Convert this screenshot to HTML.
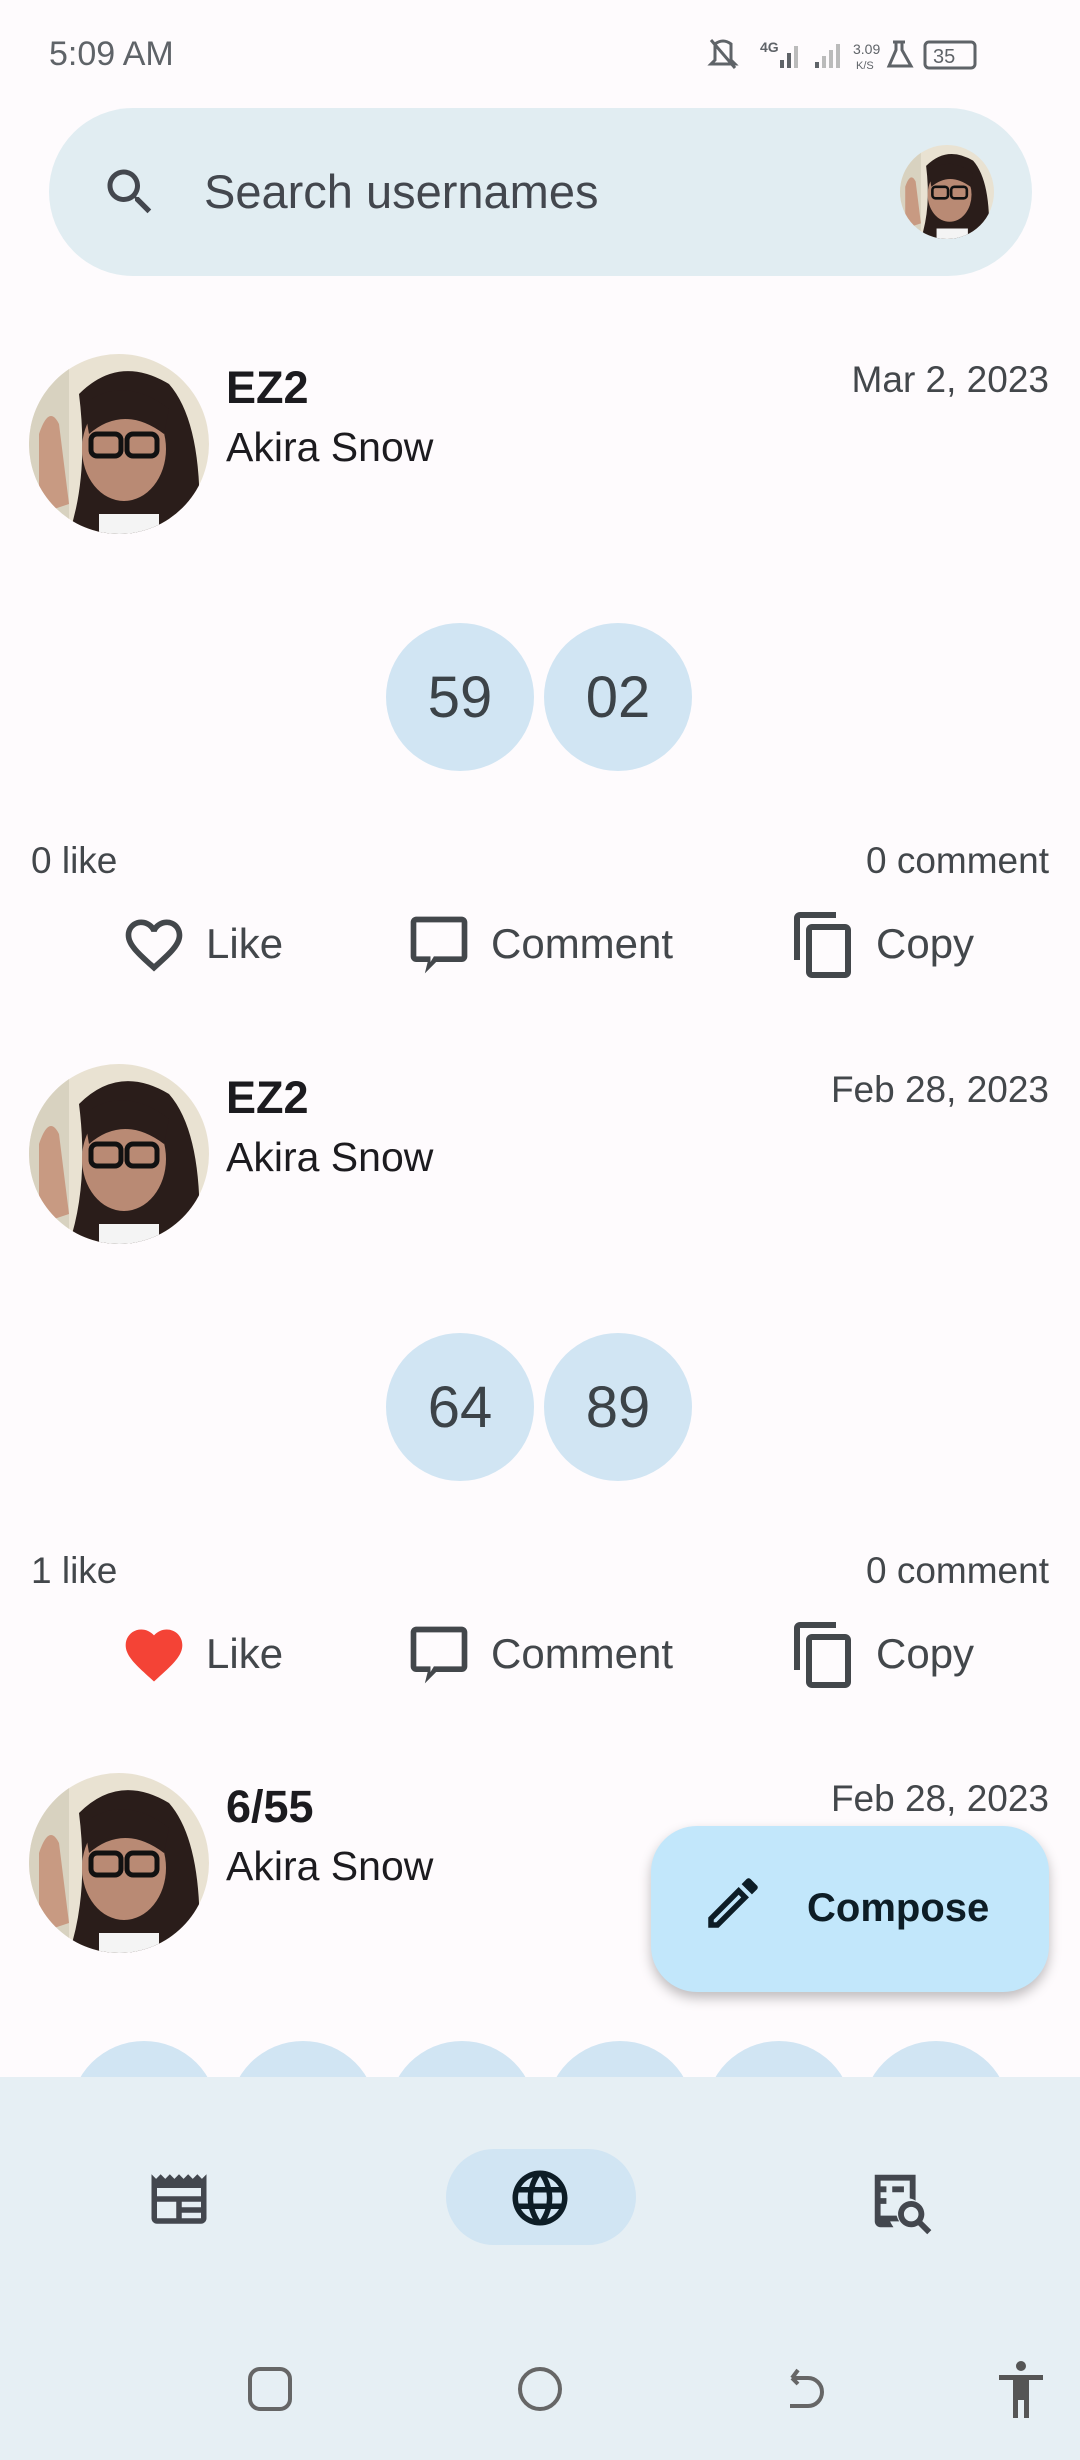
<!DOCTYPE html>
<html><head><meta charset="utf-8">
<style>
*{margin:0;padding:0;box-sizing:border-box}
body{width:1080px;height:2460px;background:#fefbfd;font-family:"Liberation Sans",sans-serif;position:relative;overflow:hidden;color:#1c1b1f}
.a{position:absolute}
.t{white-space:nowrap}
.circ{position:absolute;width:148px;height:148px;border-radius:50%;background:#d1e5f3;color:#3c4348;font-size:58px;display:flex;align-items:center;justify-content:center}
.gray{color:#43474b}
</style></head><body>
<svg width="0" height="0" style="position:absolute"><defs>
<g id="av">
<circle cx="90" cy="90" r="90" fill="#e9e2d2"/>
<clipPath id="cp"><circle cx="90" cy="90" r="90"/></clipPath>
<g clip-path="url(#cp)">
<rect x="0" y="0" width="40" height="180" fill="#d8d2c0"/>
<path d="M50 40 Q90 0 140 30 Q175 70 170 180 L40 180 Q60 120 50 40Z" fill="#2a1d1a"/>
<ellipse cx="95" cy="95" rx="42" ry="52" fill="#b98a74"/>
<path d="M55 50 Q95 20 140 55 L135 80 Q95 50 60 80Z" fill="#2a1d1a"/>
<rect x="62" y="80" width="30" height="22" rx="6" fill="none" stroke="#111" stroke-width="5"/>
<rect x="98" y="80" width="30" height="22" rx="6" fill="none" stroke="#111" stroke-width="5"/>
<path d="M10 80 Q20 50 30 70 L40 150 L10 160Z" fill="#c89a82"/>
<path d="M70 160 L130 160 L130 180 L70 180Z" fill="#f4f4f4"/>
</g></g>
<g id="heart"><path d="M16.5 3c-1.74 0-3.41.81-4.5 2.09C10.91 3.81 9.24 3 7.5 3 4.42 3 2 5.420 2 8.5c0 3.78 3.4 6.86 8.55 11.54L12 21.35l1.45-1.32C18.6 15.36 22 12.28 22 8.5 22 5.42 19.58 3 16.5 3zm-4.4 15.55l-.1.1-.1-.1C7.14 14.24 4 11.39 4 8.5 4 6.5 5.5 5 7.5 5c1.54 0 3.04.99 3.570 2.36h1.87C13.46 5.99 14.96 5 16.5 5c2 0 3.5 1.5 3.5 3.5 0 2.89-3.14 5.74-7.9 10.05z"/></g>
<g id="heartf"><path d="M12 21.35l-1.45-1.32C5.4 15.36 2 12.28 2 8.5 2 5.42 4.42 3 7.5 3c1.74 0 3.41.81 4.5 2.09C13.09 3.81 14.76 3 16.5 3 19.58 3 22 5.42 22 8.5c0 3.78-3.4 6.86-8.55 11.54L12 21.35z"/></g>
<g id="cmt"><path d="M20 2H4c-1.1 0-2 .9-2 2v12c0 1.1.9 2 2 2h4l-1 4 4-4h9c1.1 0 2-.9 2-2V4c0-1.1-.9-2-2-2zm0 14h-9.8L9 18v-2H4V4h16v12z"/></g>
<g id="cpy"><path d="M16 1H4c-1.1 0-2 .9-2 2v14h2V3h12V1zm3 4H8c-1.1 0-2 .9-2 2v14c0 1.1.9 2 2 2h11c1.1 0 2-.9 2-2V7c0-1.1-.9-2-2-2zm0 16H8V7h11v14z"/></g>
</defs></svg>

<!-- status bar -->
<div class="a t" style="left:49px;top:35px;font-size:34px;color:#5f6368">5:09 AM</div>
<svg class="a" style="left:705px;top:36px" width="330" height="40" viewBox="0 0 330 40">
<g fill="#5f6368">
<path d="M10 8 Q18 2 26 8 L26 24 L30 28 L6 28 L10 24Z" fill="none" stroke="#5f6368" stroke-width="3"/>
<line x1="6" y1="4" x2="30" y2="32" stroke="#5f6368" stroke-width="3"/>
<text x="55" y="16" font-size="14" font-family="Liberation Sans" font-weight="bold">4G</text>
<rect x="75" y="24" width="4" height="8"/><rect x="82" y="17" width="4" height="15"/><rect x="89" y="10" width="4" height="22" fill="#bbb"/>
<rect x="110" y="26" width="4" height="6"/><rect x="117" y="20" width="4" height="12" fill="#bbb"/><rect x="124" y="14" width="4" height="18" fill="#bbb"/><rect x="131" y="8" width="4" height="24" fill="#bbb"/>
<text x="148" y="18" font-size="14" font-family="Liberation Sans">3.09</text>
<text x="151" y="33" font-size="11" font-family="Liberation Sans">K/S</text>
<path d="M188 6 L200 6 M191 6 L191 14 L184 30 L206 30 L197 14 L197 6" fill="none" stroke="#5f6368" stroke-width="3"/>
<rect x="220" y="6" width="50" height="26" rx="4" fill="none" stroke="#5f6368" stroke-width="3"/>
<text x="228" y="27" font-size="20" font-family="Liberation Sans">35</text>
</g></svg>

<!-- search -->
<div class="a" style="left:49px;top:108px;width:983px;height:168px;border-radius:84px;background:#e1edf2"></div>
<svg class="a" style="left:100px;top:162px" width="60" height="60" viewBox="0 0 24 24"><path fill="#43474e" d="M15.5 14h-.79l-.28-.27C15.41 12.59 16 11.11 16 9.5 16 5.91 13.09 3 9.5 3S3 5.91 3 9.5 5.91 16 9.5 16c1.61 0 3.09-.59 4.23-1.57l.27.28v.79l5 4.99L20.49 19l-4.99-5zm-6 0C7.01 14 5 11.990 5 9.5S7.01 5 9.5 5 14 7.01 14 9.5 11.99 14 9.5 14z"/></svg>
<div class="a t" style="left:204px;top:164px;font-size:47px;color:#43474e">Search usernames</div>
<svg class="a" style="left:900px;top:145px" width="94" height="94" viewBox="0 0 180 180"><use href="#av"/></svg>

<!-- Post 1 -->
<svg class="a" style="left:29px;top:354px" width="180" height="180" viewBox="0 0 180 180"><use href="#av"/></svg>
<div class="a t" style="left:226px;top:362px;font-size:45px;font-weight:bold">EZ2</div>
<div class="a t" style="left:226px;top:424px;font-size:41px">Akira Snow</div>
<div class="a t gray" style="right:31px;top:359px;font-size:37px">Mar 2, 2023</div>
<div class="circ" style="left:386px;top:623px">59</div>
<div class="circ" style="left:544px;top:623px">02</div>
<div class="a t gray" style="left:31px;top:840px;font-size:37px">0 like</div>
<div class="a t gray" style="right:31px;top:840px;font-size:37px">0 comment</div>
<svg class="a" style="left:120px;top:911px" width="68" height="68" viewBox="0 0 24 24" fill="#43474b"><use href="#heart"/></svg>
<div class="a t gray" style="left:206px;top:920px;font-size:42px">Like</div>
<svg class="a" style="left:405px;top:911px" width="68" height="68" viewBox="0 0 24 24" fill="#43474b"><use href="#cmt"/></svg>
<div class="a t gray" style="left:491px;top:920px;font-size:42px">Comment</div>
<svg class="a" style="left:788px;top:909px" width="72" height="72" viewBox="0 0 24 24" fill="#43474b"><use href="#cpy"/></svg>
<div class="a t gray" style="left:876px;top:920px;font-size:42px">Copy</div>

<!-- Post 2 -->
<svg class="a" style="left:29px;top:1064px" width="180" height="180" viewBox="0 0 180 180"><use href="#av"/></svg>
<div class="a t" style="left:226px;top:1072px;font-size:45px;font-weight:bold">EZ2</div>
<div class="a t" style="left:226px;top:1134px;font-size:41px">Akira Snow</div>
<div class="a t gray" style="right:31px;top:1069px;font-size:37px">Feb 28, 2023</div>
<div class="circ" style="left:386px;top:1333px">64</div>
<div class="circ" style="left:544px;top:1333px">89</div>
<div class="a t gray" style="left:31px;top:1550px;font-size:37px">1 like</div>
<div class="a t gray" style="right:31px;top:1550px;font-size:37px">0 comment</div>
<svg class="a" style="left:120px;top:1621px" width="68" height="68" viewBox="0 0 24 24" fill="#f44336"><use href="#heartf"/></svg>
<div class="a t gray" style="left:206px;top:1630px;font-size:42px">Like</div>
<svg class="a" style="left:405px;top:1621px" width="68" height="68" viewBox="0 0 24 24" fill="#43474b"><use href="#cmt"/></svg>
<div class="a t gray" style="left:491px;top:1630px;font-size:42px">Comment</div>
<svg class="a" style="left:788px;top:1619px" width="72" height="72" viewBox="0 0 24 24" fill="#43474b"><use href="#cpy"/></svg>
<div class="a t gray" style="left:876px;top:1630px;font-size:42px">Copy</div>

<!-- Post 3 -->
<svg class="a" style="left:29px;top:1773px" width="180" height="180" viewBox="0 0 180 180"><use href="#av"/></svg>
<div class="a t" style="left:226px;top:1781px;font-size:45px;font-weight:bold">6/55</div>
<div class="a t" style="left:226px;top:1843px;font-size:41px">Akira Snow</div>
<div class="a t gray" style="right:31px;top:1778px;font-size:37px">Feb 28, 2023</div>
<div class="circ" style="left:70px;top:2041px"></div>
<div class="circ" style="left:229px;top:2041px"></div>
<div class="circ" style="left:388px;top:2041px"></div>
<div class="circ" style="left:546px;top:2041px"></div>
<div class="circ" style="left:705px;top:2041px"></div>
<div class="circ" style="left:862px;top:2041px"></div>

<!-- FAB -->
<div class="a" style="left:651px;top:1826px;width:398px;height:166px;border-radius:46px;background:#c2e7fb;box-shadow:0 6px 12px rgba(0,0,0,0.25)"></div>
<svg class="a" style="left:700px;top:1870px" width="66" height="66" viewBox="0 0 24 24" fill="#0d1d26"><path d="M3 17.25V21h3.75L17.81 9.94l-3.75-3.75L3 17.25zM5.92 19H5v-.92l9.06-9.06.92.92L5.92 19zM20.71 5.63l-2.34-2.34c-.2-.2-.45-.29-.71-.29s-.51.1-.7.29l-1.83 1.83 3.75 3.75 1.83-1.83c.39-.39.39-1.02 0-1.41z"/></svg>
<div class="a t" style="left:807px;top:1886px;font-size:40px;font-weight:bold;color:#0d1d26">Compose</div>

<!-- bottom nav -->
<div class="a" style="left:0;top:2077px;width:1080px;height:383px;background:#e6eff4"></div>
<div class="a" style="left:446px;top:2149px;width:190px;height:96px;border-radius:48px;background:#d1e5f3"></div>
<svg class="a" style="left:146px;top:2166px" width="66" height="66" viewBox="0 0 24 24" fill="#43474e"><path d="M22 3l-1.67 1.67L18.67 3 17 4.67 15.33 3l-1.66 1.67L12 3l-1.67 1.67L8.67 3 7 4.67 5.33 3 3.67 4.67 2 3v16c0 1.1.9 2 2 2h16c1.1 0 2-.9 2-2V3zM11 19H4v-6h7v6zm9 0h-7v-2h7v2zm0-4h-7v-2h7v2zm0-4H4V8h16v3z"/></svg>
<svg class="a" style="left:507px;top:2165px" width="66" height="66" viewBox="0 0 24 24" fill="#0d1d26"><path d="M11.99 2C6.47 2 2 6.48 2 12s4.47 10 9.99 10C17.52 22 22 17.52 22 12S17.52 2 11.99 2zm6.93 6h-2.95c-.32-1.25-.78-2.45-1.38-3.56 1.84.63 3.37 1.91 4.33 3.56zM12 4.04c.83 1.2 1.48 2.53 1.91 3.96h-3.82c.43-1.43 1.08-2.76 1.91-3.96zM4.26 14C4.1 13.36 4 12.69 4 12s.1-1.36.26-2h3.38c-.08.66-.14 1.32-.14 2s.06 1.34.14 2H4.26zm.82 2h2.95c.32 1.25.78 2.45 1.38 3.56-1.84-.63-3.37-1.9-4.33-3.56zm2.950-8H5.08c.96-1.66 2.49-2.93 4.33-3.56C8.81 5.55 8.35 6.75 8.03 8zM12 19.96c-.83-1.2-1.48-2.53-1.91-3.96h3.82c-.43 1.43-1.08 2.76-1.91 3.96zM14.34 14H9.66c-.09-.66-.16-1.32-.16-2s.07-1.35.16-2h4.68c.09.65.16 1.32.16 2s-.07 1.34-.16 2zm.25 5.56c.6-1.11 1.06-2.31 1.38-3.56h2.95c-.96 1.65-2.49 2.93-4.33 3.56zM16.36 14c.08-.66.14-1.32.14-2s-.06-1.34-.14-2h3.38c.16.64.26 1.31.26 2s-.1 1.36-.26 2h-3.38z"/></svg>
<svg class="a" style="left:866px;top:2166px" width="70" height="70" viewBox="0 0 24 24" fill="#43474e"><path d="M7 9H5V7h2v2zm0 4H5v-2h2v2zm-2 6h6.4c-.4-.6-.7-1.3-.9-2H5v2zm12-8V3H3v16c0 1.1.9 2 2 2h4.4l-.1-.2c-.4-.6-.8-1.2-1-1.8H5V5h10v6.1c.7.1 1.4.4 2 .8V11zm-4-2H9V7h4v2zm2.5 3c-2.5 0-4.5 2-4.5 4.5s2 4.5 4.5 4.5c.9 0 1.7-.3 2.4-.7L21 23.4l1.4-1.4-3.1-3.1c.4-.7.7-1.5.7-2.4 0-2.5-2-4.5-4.5-4.5zm0 7c-1.4 0-2.5-1.1-2.5-2.5s1.1-2.5 2.5-2.5 2.5 1.1 2.5 2.5-1.1 2.5-2.5 2.5z"/></svg>

<!-- system nav -->
<div class="a" style="left:248px;top:2367px;width:44px;height:44px;border:4px solid #666;border-radius:12px"></div>
<div class="a" style="left:518px;top:2367px;width:44px;height:44px;border:4px solid #666;border-radius:50%"></div>
<svg class="a" style="left:784px;top:2364px" width="50" height="50" viewBox="0 0 50 50"><path d="M6 42 H24 A14 14 0 0 0 24 14 H8 M8 14 L14 6 M8 14 L14 20" fill="none" stroke="#666" stroke-width="4"/></svg>
<svg class="a" style="left:996px;top:2360px" width="50" height="60" viewBox="0 0 50 60"><circle cx="25" cy="6" r="5" fill="#555"/><path d="M3 15 H47 V20 H33 V58 H28 V40 H22 V58 H17 V20 H3Z" fill="#555"/></svg>
</body></html>
